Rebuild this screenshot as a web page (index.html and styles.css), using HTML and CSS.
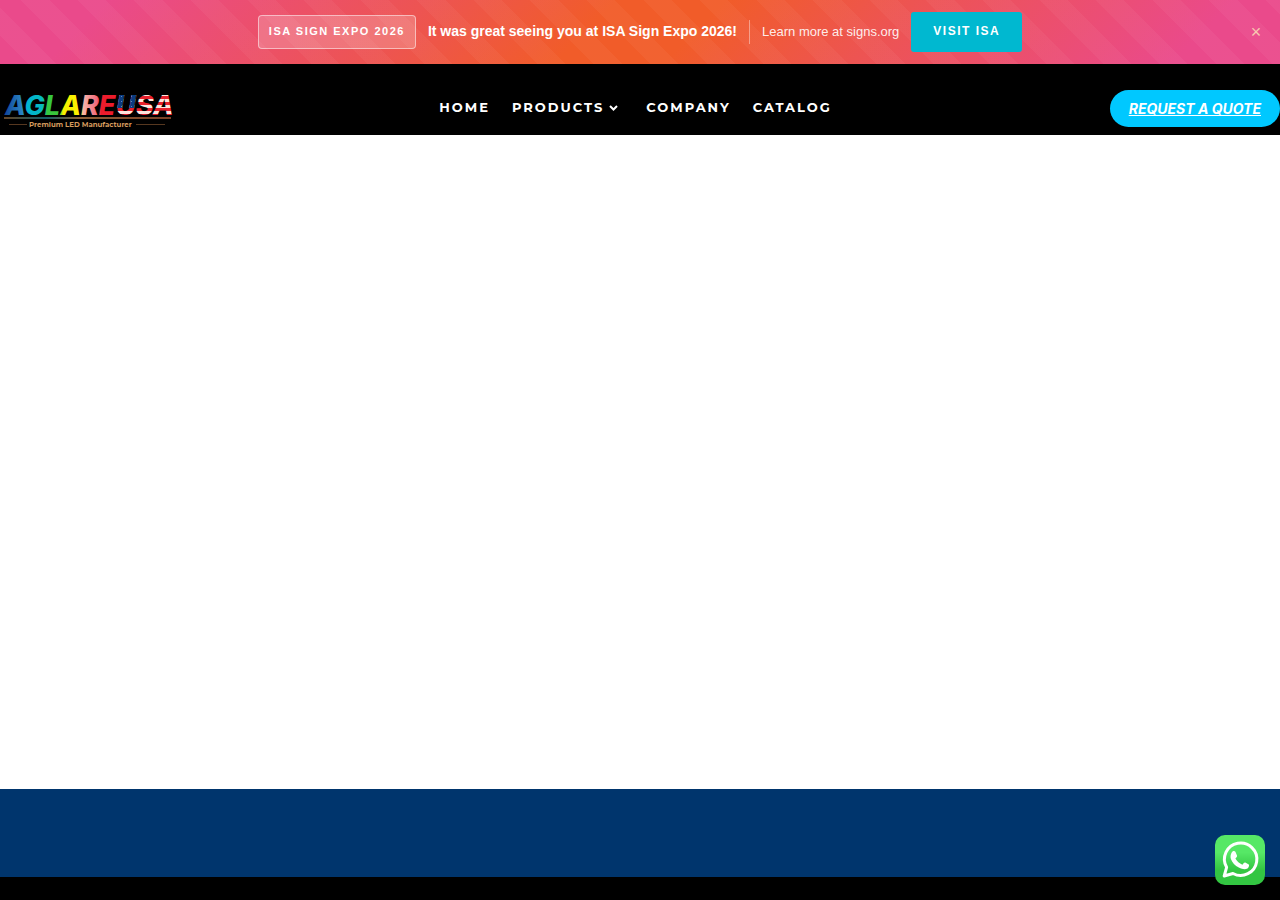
FILE: index.html
```html
<!DOCTYPE html>
<html lang="en">
<head>
<meta charset="utf-8">
<meta name="viewport" content="width=device-width, initial-scale=1">
<title>Aglare USA</title>
<link rel="stylesheet" href="styles.css">
</head>
<body>
<aside class="promo" aria-label="Announcement">
  <span class="promo-badge">ISA SIGN EXPO 2026</span>
  <strong class="promo-title">It was great seeing you at ISA Sign Expo 2026!</strong>
  <span class="promo-divider"></span>
  <span class="promo-note">Learn more at signs.org</span>
  <a class="promo-cta" href="#isa">VISIT ISA</a>
  <button class="promo-close" type="button" aria-label="Close announcement">×</button>
</aside>
<header class="site-header">
  <a class="logo" href="#home" aria-label="Aglare USA">
    <svg width="176" height="40" viewBox="0 0 176 40">
      <defs>
        <linearGradient id="word" gradientUnits="userSpaceOnUse" x1="6" y1="0" x2="118" y2="0">
          <stop offset="0" stop-color="#134a9c"/><stop offset=".15" stop-color="#2a86c4"/>
          <stop offset=".19" stop-color="#00b5d0"/><stop offset=".32" stop-color="#06b8c0"/>
          <stop offset=".37" stop-color="#35c840"/><stop offset=".48" stop-color="#3cc63a"/>
          <stop offset=".51" stop-color="#f4f000"/><stop offset=".66" stop-color="#fff200"/>
          <stop offset=".69" stop-color="#f7b5a8"/><stop offset=".81" stop-color="#f06a7c"/>
          <stop offset=".85" stop-color="#ec1c2c"/><stop offset="1" stop-color="#ec1c2c"/>
        </linearGradient>
        <pattern id="stripes" width="8" height="6" patternUnits="userSpaceOnUse">
          <rect width="8" height="6" fill="#ffe4dc"/><rect width="8" height="3" fill="#e8202c"/>
        </pattern>
        <pattern id="stars" width="5" height="5" patternUnits="userSpaceOnUse">
          <rect width="5" height="5" fill="#0c3c80"/><rect x="1" y="1" width="1" height="1" fill="#5f88bc"/>
        </pattern>
        <linearGradient id="rule" x1="0" x2="1" y1="0" y2="0">
          <stop offset="0" stop-color="#654526"/><stop offset=".25" stop-color="#155c68"/>
          <stop offset=".45" stop-color="#8c6038"/><stop offset="1" stop-color="#7b4025"/>
        </linearGradient>
        <clipPath id="canton"><path d="M114 0h25l-4 18h-25z"/></clipPath>
      </defs>
      <text class="logo-word" x="5" y="25" fill="url(#word)">AGLARE</text>
      <text class="logo-word" x="116" y="25" fill="url(#stripes)">USA</text>
      <text class="logo-word" x="116" y="25" fill="url(#stars)" clip-path="url(#canton)">USA</text>
      <rect x="4" y="27" width="167" height="2" fill="url(#rule)"/>
      <path d="M9 34.500h18M136 34.500h29" stroke="#573820"/>
      <text class="logo-tag" x="29" y="37">Premium LED Manufacturer</text>
    </svg>
  </a>
  <nav class="menu" aria-label="Main">
    <a href="#home">HOME</a>
    <a class="has-menu" href="#products">PRODUCTS
      <svg width="9" height="6" viewBox="0 0 9 6"><path d="M1 1l3.500 3.500L8 1" fill="none" stroke="#fff" stroke-width="2"/></svg>
    </a>
    <a href="#company">COMPANY</a>
    <a href="#catalog">CATALOG</a>
  </nav>
  <a class="quote" href="#quote">REQUEST A QUOTE</a>
</header>
<main class="content"></main>
<footer class="site-footer">
  <div class="footer-band"></div>
  <div class="footer-base"></div>
</footer>
<a class="whatsapp" href="#chat" aria-label="Chat on WhatsApp">
  <svg width="50" height="50" viewBox="0 0 50 50">
    <defs><linearGradient id="wa" x1="0" x2="0" y1="0" y2="1"><stop offset=".35" stop-color="#56e866"/><stop offset=".7" stop-color="#33c642"/></linearGradient></defs>
    <rect width="50" height="50" rx="10" fill="url(#wa)"/>
    <path d="M9.200 41l2.400-8.700A16.200 16.200 0 1 1 18 38.500z" fill="none" stroke="#fff" stroke-width="3" stroke-linejoin="round"/>
    <path d="M17.900 16.300c.6-.5 1.900-.5 2.500.4l1.600 3.700c.3.800-.1 1.500-1.600 3.200 1.700 3 4 5 7 6.100 1.500-1.900 2-2.500 2.900-2.100l3.500 1.800c.7.500.1 3-1.300 4.100-2.300 1.300-5 1-8.700-.9-3.700-2-6.700-5.100-7.900-8.700-.9-2.800.2-6.400 2-7.600z" fill="#fff"/>
  </svg>
</a>
</body>
</html>
```
FILE: styles.css
```css
* { box-sizing: border-box; }
body {
  margin: 0;
  min-height: 100vh;
  display: flex;
  flex-direction: column;
  background: #fff;
  font-family: "Liberation Sans", Arial, sans-serif;
}
a { color: inherit; text-decoration: none; }
svg { display: block; }

.promo {
  position: relative;
  min-height: 64px;
  padding: 12px 48px;
  display: flex;
  align-items: center;
  justify-content: center;
  gap: 12px;
  color: #fff;
  background:
    repeating-linear-gradient(45deg, transparent 0 20px, rgba(255, 255, 255, .04) 20px 40px),
    linear-gradient(135deg, #ea4a8b 0%, #ea4a8b 8%, #ed5452 32%, #f15c29 46%, #f15c29 54%, #ed5452 68%, #ea4a8b 92%, #ea4a8b 100%);
}
.promo-badge {
  padding: 0 10px 2px;
  line-height: 30px;
  border: 1px solid rgba(255, 255, 255, .5);
  border-radius: 4px;
  background: rgba(255, 255, 255, .2);
  font-size: 11px;
  font-weight: 700;
  letter-spacing: 1.500px;
}
.promo-title { padding-bottom: 2px; font-size: 14px; }
.promo-divider { width: 1px; height: 24px; background: rgba(255, 255, 255, .4); }
.promo-note { padding-bottom: 2px; font-size: 13px; color: rgba(255, 255, 255, .9); }
.promo-cta {
  padding: 0 22px 2px;
  line-height: 38px;
  border-radius: 3px;
  background: #00b8d0;
  font-size: 12px;
  font-weight: 700;
  letter-spacing: 1.500px;
}
.promo-close {
  position: absolute;
  top: 20px;
  right: 12px;
  width: 24px;
  height: 24px;
  padding: 0;
  border: 0;
  background: none;
  color: #f8c8b0;
  font: 18px/24px "Liberation Sans", Arial, sans-serif;
}

.site-header {
  display: grid;
  grid-template-columns: 1fr auto 1fr;
  align-items: start;
  padding-top: 26px;
  background: #000;
  color: #fff;
}
.logo { padding-bottom: 5px; }
.menu {
  display: flex;
  gap: 22px;
  padding-right: 9px;
  font: 700 13px/35px Montserrat, Inter, sans-serif;
  letter-spacing: 2px;
}
.menu a { display: flex; align-items: center; gap: 5px; }
.menu .has-menu { padding-right: 6px; }
.quote {
  justify-self: end;
  padding: 0 19px;
  border-radius: 19px;
  background: #00c8ff;
  font: italic 700 14px/37px Inter, sans-serif;
  text-decoration: underline;
}
.logo-word { font: italic 800 27px Inter, sans-serif; }
.logo-tag { font: 700 7px Montserrat, Inter, sans-serif; fill: #d49a5c; }

.content { flex: 1; }
.footer-band { height: 88px; background: #00356d; }
.footer-base { height: 23px; background: #000; }
.whatsapp { position: fixed; right: 15px; bottom: 15px; }
```
